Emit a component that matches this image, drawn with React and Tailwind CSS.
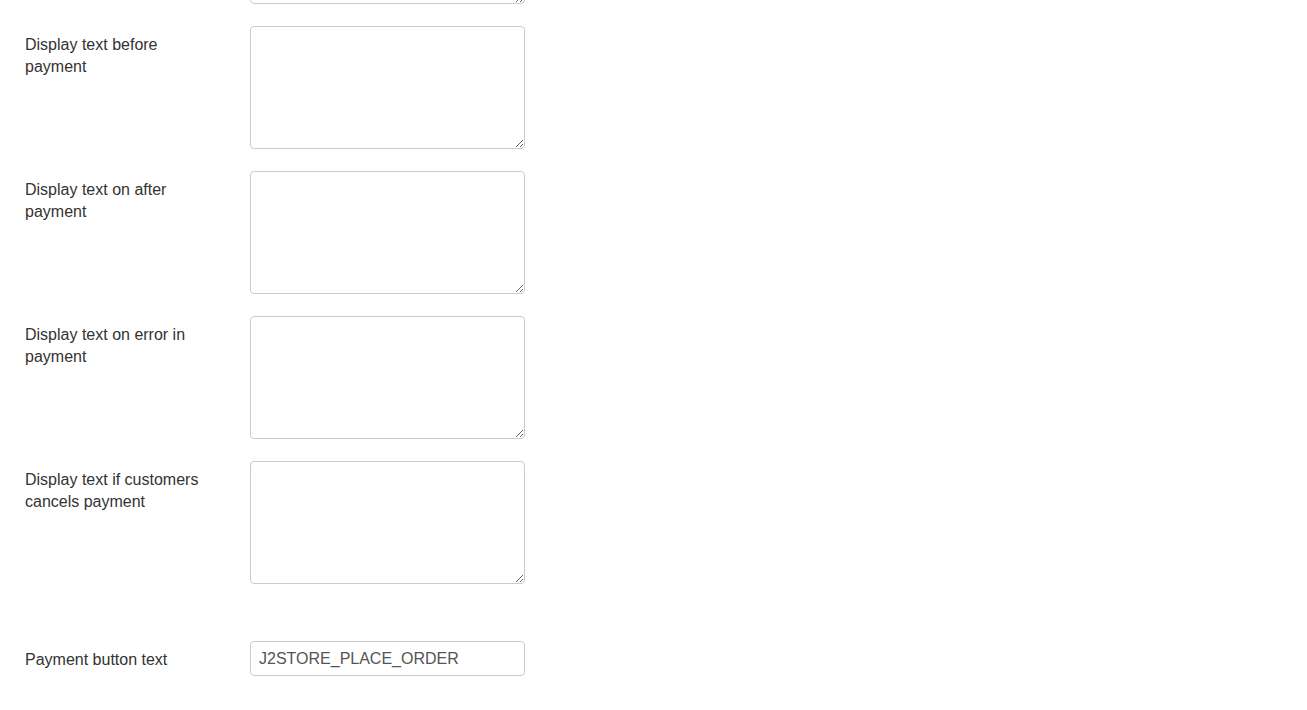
const textRows = [
    "Display text before payment",
    "Display text on after payment",
    "Display text on error in payment",
    "Display text if customers cancels payment",
];

function Row({ label, children }) {
    return (
        <div className="flex">
            <label className="w-[250px] shrink-0 pl-[25px] pr-[50px] pt-[8px] text-[16px] leading-[22px] text-[#333]">
                {label}
            </label>
            {children}
        </div>
    );
}

export default function App() {
    return (
        <main className="min-h-[710px] bg-white font-['Liberation_Sans',Arial,sans-serif] overflow-hidden">
            <div className="flex flex-col gap-[22px] -mt-[119px]">
                <Row label="">
                    <textarea className="w-[275px] h-[123px] rounded border border-[#ccc] bg-white" />
                </Row>
                {textRows.map(label => (
                    <Row key={label} label={label}>
                        <textarea className="w-[275px] h-[123px] rounded border border-[#ccc] bg-white" />
                    </Row>
                ))}
            </div>
            <div className="mt-[57px] flex items-center">
                <label className="w-[250px] shrink-0 pl-[25px] pt-[2px] text-[16px] leading-[22px] text-[#333]">
                    Payment button text
                </label>
                <input
                    type="text"
                    defaultValue="J2STORE_PLACE_ORDER"
                    className="w-[275px] h-[35px] rounded border border-[#ccc] px-2 text-[16px] text-[#555] outline-none"
                />
            </div>
        </main>
    );
}
